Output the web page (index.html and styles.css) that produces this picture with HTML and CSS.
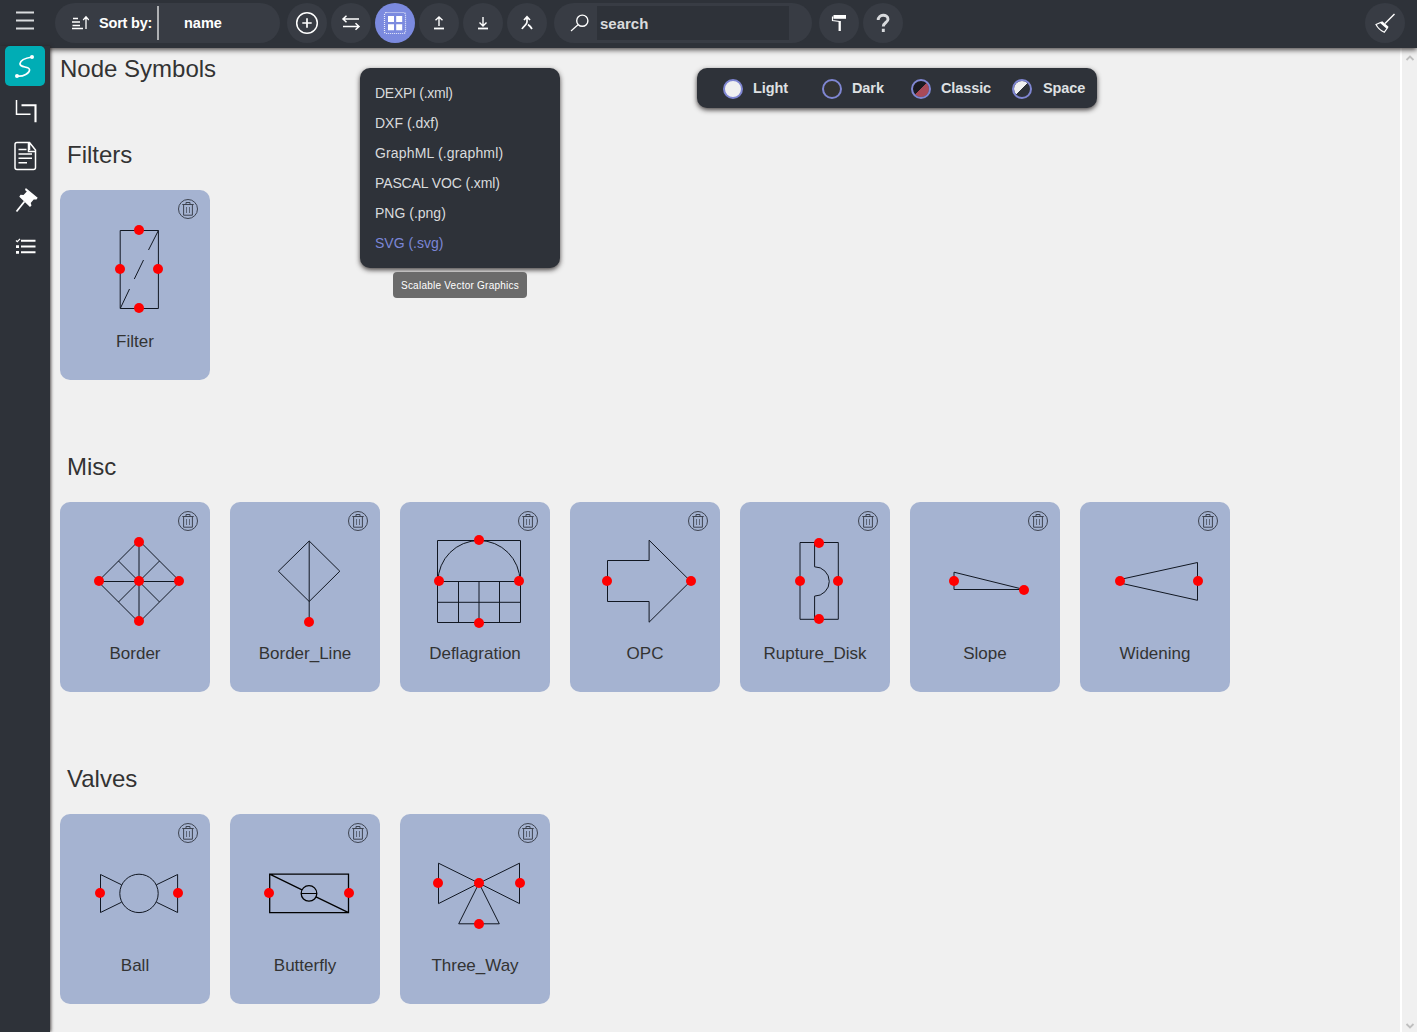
FILE: index.html
```html
<!DOCTYPE html>
<html lang="en">
<head>
<meta charset="utf-8">
<title>Node Symbols</title>
<link rel="stylesheet" href="styles.css">
</head>
<body>
<svg class="defs" width="0" height="0">
  <symbol id="trash" viewBox="0 0 20 20">
    <circle cx="10" cy="10" r="9.5"/>
    <path d="M4.3 5.5h11.4M8 5.3V3.5h4v1.8M5.6 6v10.2h8.8V6"/>
    <path class="thin" d="M8.5 8v6M11.5 8v6"/>
  </symbol>
</svg>
<header class="topbar">
  <button class="menu-btn"><svg width="20" height="20" viewBox="0 0 20 20"><path d="M1 2.500h18M1 10.500h18M1 18.500h18" stroke-width="2"/></svg></button>
  <div class="pill sort">
    <svg width="18" height="16" viewBox="0 0 18 16"><path d="M2 3.500h5M1 7h8M1.500 10.500h7.500M1 13.500h11M15 14V2M12.200 5L15 1.700 17.800 5" stroke-width="1.300"/></svg>
    <span class="sort-label">Sort by:</span><span class="sort-value">name</span>
  </div>
  <nav class="tools">
    <button class="tool"><svg width="24" height="24" viewBox="0 0 24 24"><circle cx="12" cy="12" r="10.300" stroke-width="1.500"/><path d="M12 7.300v9.400M7.300 12h9.400" stroke-width="1.700"/></svg></button>
    <button class="tool"><svg width="24" height="24" viewBox="0 0 24 24"><path d="M20 8H4M7.500 4.800L4 8l3.500 3.200M4 15.500h16M16.500 12.300l3.500 3.200-3.500 3.200" stroke-width="1.500"/></svg></button>
    <button class="tool active"><svg width="24" height="24" viewBox="0 0 24 24"><rect x="1.500" y="1.500" width="21" height="21" rx="2" stroke-width="1.200" stroke-dasharray="1 1" opacity=".85"/><path class="solid" d="M5 5h6v6H5zM13.200 5h6v6h-6zM5 13.200h6v6H5zM13.200 13.200h6v6h-6z"/></svg></button>
    <button class="tool"><svg width="24" height="24" viewBox="0 0 24 24"><path d="M12 15V6M8.500 9.300L12 6 15.500 9.300" stroke-width="1.400"/><path d="M7 17.500h10" stroke-width="1.800"/></svg></button>
    <button class="tool"><svg width="24" height="24" viewBox="0 0 24 24"><path d="M12 6V14.500M8.500 11.500l3.500 3.400 3.500-3.400" stroke-width="1.400"/><path d="M7 17.500h10" stroke-width="1.800"/></svg></button>
    <button class="tool"><svg width="24" height="24" viewBox="0 0 24 24"><path d="M12 5.800V11c0 3-3.500 3.500-5 7M13 13.500c1.800 1.300 3 2.700 4 4.500M9 9l3-3.200L15 9" stroke-width="1.700"/></svg></button>
  </nav>
  <div class="pill search">
    <svg width="20" height="18" viewBox="0 0 20 18"><circle cx="12.300" cy="6.700" r="5.600" stroke-width="1.400"/><path d="M8 10.800L1 17" stroke-width="1.200"/></svg>
    <span class="search-field">search</span>
  </div>
  <nav class="tools">
    <button class="tool"><svg width="24" height="24" viewBox="0 0 24 24"><path class="solid" d="M6.500 4h12.500v3.800H6.500z"/><path d="M6.500 6H5.500v3.500l7.200 1" stroke-width="1.200"/><path d="M12.700 10v10" stroke-width="2.300"/></svg></button>
    <button class="tool help"><svg width="24" height="24" viewBox="0 0 24 24"><path d="M7.200 9c0-6.200 9.800-6.200 9.800-.8 0 3.200-4.700 3.500-4.700 7.300M12.300 17.700v3.300" stroke-width="2.900"/></svg></button>
  </nav>
  <button class="tool clean"><svg width="24" height="24" viewBox="0 0 24 24"><path d="M21.500 3L12 12.500" stroke-width="1.400"/><path d="M8.300 11.200l6.300 5.500-3.300 4.600C7.500 19.500 4.500 16.500 3 13.500l5.300-2.300z" stroke-width="1.200"/><path d="M8.300 11.200l6.300 5.500" stroke-width="2.800"/></svg></button>
</header>
<div class="body">
  <aside class="sidebar">
    <button class="side active"><svg width="30" height="30" viewBox="0 0 30 30"><path d="M7 25c6 1 13-3 12.500-6.500C19 15 9.500 17 10 12.500 10.500 9 16 7 22 6" stroke-width="1.700"/><circle class="solid" cx="7" cy="25" r="2"/><circle class="solid" cx="22" cy="6" r="2"/></svg></button>
    <button class="side"><svg width="30" height="30" viewBox="0 0 30 30"><path d="M6.500 4v14.300H20.500" stroke-width="1.500"/><path d="M11.500 9.300h14v17" stroke-width="2.100"/></svg></button>
    <button class="side"><svg width="30" height="30" viewBox="0 0 30 30"><path d="M7 1.600h12.500L25.500 9v17.500q0 2-2 2H7q-2 0-2-2v-23q0-1.900 2-1.900zM18.500 2v8.500h7M19.500 2v7" stroke-width="1.500"/><path d="M8.500 8.500h8M8.500 13H22M8.500 17.200H22M8.500 21.700H17" stroke-width="1.500"/></svg></button>
    <button class="side"><svg width="30" height="30" viewBox="0 0 30 30"><path class="solid" d="M15.800 2l11.900 9.700-1.200 1.900-2.800-.2-3 3.700.8 2.500-1.500 1.500L9.300 10.700l1.200-2 3 .3 3.300-3.500-1.800-1.600z"/><path d="M14.500 15.500L6.500 25.500" stroke-width="1.800"/></svg></button>
    <button class="side"><svg width="30" height="30" viewBox="0 0 30 30"><path d="M11 9.800h14.500M11 15.500h14.500M11 21.300h14.500" stroke-width="2"/><path d="M7.500 14.200v2.700M7.500 20v2.700" stroke-width="3"/><path d="M6 9.500l1.300 1.200L10 7.800" stroke-width="1.200"/></svg></button>
  </aside>
  <main class="content">
    <h1>Node Symbols</h1>
    <section>
      <h2>Filters</h2>
      <div class="cards">
        <article class="card"><svg class="trash"><use href="#trash"/></svg>
          <svg class="drawing" viewBox="0 29 150 106"><path d="M60.200 40.500h38.200v78H60.200zM98.400 40.500L88.500 60M83.500 70l-9.200 19M69.500 99l-9 19"/><g class="ports"><circle cx="79" cy="40" r="5"/><circle cx="60" cy="79" r="5"/><circle cx="98" cy="79" r="5"/><circle cx="79" cy="118" r="5"/></g></svg>
          <span>Filter</span></article>
      </div>
    </section>
    <section>
      <h2>Misc</h2>
      <div class="cards">
        <article class="card"><svg class="trash"><use href="#trash"/></svg>
          <svg class="drawing" viewBox="0 29 150 106"><path d="M79 38.500L120 79.500l-41 41-41-41zM79 38.500v82M38 79.500h82M58.500 59l41 41M99.500 59l-41 41"/><g class="ports"><circle cx="79" cy="40" r="5"/><circle cx="39" cy="79" r="5"/><circle cx="119" cy="79" r="5"/><circle cx="79" cy="79" r="5"/><circle cx="79" cy="119" r="5"/></g></svg>
          <span>Border</span></article>
        <article class="card"><svg class="trash"><use href="#trash"/></svg>
          <svg class="drawing" viewBox="0 29 150 106"><path d="M79.200 39l30.600 30.200-30.600 30.300L48.400 69.200zM79.200 39v80"/><g class="ports"><circle cx="79" cy="120" r="5"/></g></svg>
          <span>Border_Line</span></article>
        <article class="card"><svg class="trash"><use href="#trash"/></svg>
          <svg class="drawing" viewBox="0 29 150 106"><path d="M37.500 38.500h83v82h-83zM37.500 79.500h83M37.500 100.300h83M58.500 79.500v41M79 79.500v41M99.500 79.500v41M38 79.500a41 41 0 0 1 82 0"/><g class="ports"><circle cx="79" cy="38" r="5"/><circle cx="39" cy="79" r="5"/><circle cx="119" cy="79" r="5"/><circle cx="79" cy="121" r="5"/></g></svg>
          <span>Deflagration</span></article>
        <article class="card"><svg class="trash"><use href="#trash"/></svg>
          <svg class="drawing" viewBox="0 29 150 106"><path d="M37.500 58.500h41.600V38.200l41.400 41-41.400 41V99.500H37.500z"/><g class="ports"><circle cx="37" cy="79" r="5"/><circle cx="121" cy="79" r="5"/></g></svg>
          <span>OPC</span></article>
        <article class="card"><svg class="trash"><use href="#trash"/></svg>
          <svg class="drawing" viewBox="0 29 150 106"><path d="M60 40.500h38.300v76.800H60zM74.600 40.500v24.300a14.600 14.600 0 0 1 0 29.300v23.200"/><g class="ports"><circle cx="79" cy="41" r="5"/><circle cx="60" cy="79" r="5"/><circle cx="98" cy="79" r="5"/><circle cx="79" cy="117" r="5"/></g></svg>
          <span>Rupture_Disk</span></article>
        <article class="card"><svg class="trash"><use href="#trash"/></svg>
          <svg class="drawing" viewBox="0 29 150 106"><path d="M44 70.200l70 17.300H44z"/><g class="ports"><circle cx="44" cy="79" r="5"/><circle cx="114" cy="88" r="5"/></g></svg>
          <span>Slope</span></article>
        <article class="card"><svg class="trash"><use href="#trash"/></svg>
          <svg class="drawing" viewBox="0 29 150 106"><path d="M40 77.500l77.500-17v37.800L40 81z"/><g class="ports"><circle cx="40" cy="79" r="5"/><circle cx="118" cy="79" r="5"/></g></svg>
          <span>Widening</span></article>
      </div>
    </section>
    <section>
      <h2>Valves</h2>
      <div class="cards">
        <article class="card"><svg class="trash"><use href="#trash"/></svg>
          <svg class="drawing" viewBox="0 29 150 106"><circle cx="79" cy="79.400" r="19.200"/><path d="M61.600 70.800L40.500 60.500v38l21.100-10.300M96.400 70.800l21.200-10.300v38L96.400 88.200"/><g class="ports"><circle cx="40" cy="79" r="5"/><circle cx="118" cy="79" r="5"/></g></svg>
          <span>Ball</span></article>
        <article class="card"><svg class="trash"><use href="#trash"/></svg>
          <svg class="drawing bold" viewBox="0 29 150 106"><path d="M39.700 60.200h78.800v38.500H39.700zM39.700 60.200l32.300 15.700M86 82.900l32.500 15.800"/><path class="hair" d="M71 79.500h16"/><circle cx="79" cy="79.400" r="7.800"/><g class="ports"><circle cx="39" cy="79" r="5"/><circle cx="119" cy="79" r="5"/></g></svg>
          <span>Butterfly</span></article>
        <article class="card"><svg class="trash"><use href="#trash"/></svg>
          <svg class="drawing" viewBox="0 29 150 106"><path d="M38.500 49.200L79 69.200l40.500-20v40.400L79 69.200 38.500 89.600zM79 69.200l20.300 40.600H58.700z"/><g class="ports"><circle cx="38" cy="69" r="5"/><circle cx="79" cy="69" r="5"/><circle cx="120" cy="69" r="5"/><circle cx="79" cy="110" r="5"/></g></svg>
          <span>Three_Way</span></article>
      </div>
    </section>
  </main>
  <div class="scrollbar">
    <svg width="10" height="8" viewBox="0 0 10 8"><path d="M1.500 6L5 2.500 8.500 6"/></svg>
    <svg width="10" height="8" viewBox="0 0 10 8"><path d="M1.500 2L5 5.500 8.500 2"/></svg>
  </div>
</div>
<ul class="export-menu">
  <li class="tight">DEXPI (.xml)</li><li>DXF (.dxf)</li><li class="loose">GraphML (.graphml)</li><li class="snug">PASCAL VOC (.xml)</li><li>PNG (.png)</li><li class="hover">SVG (.svg)</li>
</ul>
<div class="tooltip">Scalable Vector Graphics</div>
<div class="themes">
  <span class="theme light">Light</span><span class="theme dark">Dark</span><span class="theme classic">Classic</span><span class="theme space">Space</span>
</div>
</body>
</html>
```

FILE: styles.css
```css
*, *::before { box-sizing: border-box; }
body {
  margin: 0;
  height: 1032px;
  overflow: hidden;
  display: flex;
  flex-direction: column;
  position: relative;
  background: #f0f0f0;
  color: #333;
  font-family: "Liberation Sans", Arial, sans-serif;
}
.defs { position: absolute; }
button { border: 0; padding: 0; background: none; }
svg { display: block; flex: none; fill: none; stroke: #fff; }
.solid { fill: #fff; stroke: none; }

.topbar {
  flex: none;
  height: 48px;
  display: flex;
  align-items: center;
  padding: 0 12px 2px 0;
  background: #2e3239;
  box-shadow: 0 2px 5px rgba(40, 35, 35, .8);
  position: relative;
  z-index: 1;
  font-size: 15px;
  font-weight: bold;
  color: #fff;
}
.menu-btn { width: 55px; display: flex; padding: 0 0 6px 15px; }
.menu-btn svg { stroke: #d9dbde; }
.pill { height: 40px; border-radius: 20px; background: #383c44; display: flex; align-items: center; }
.sort { width: 225px; padding-left: 16px; }
.sort-label {
  margin-left: 10px;
  width: 60px;
  height: 34px;
  line-height: 35px;
  border-right: 2px solid #aeb0b3;
  white-space: nowrap;
  font-size: 14.500px;
  letter-spacing: -.2px;
}
.sort-value { margin-left: 25px; font-size: 14.500px; }
.tools { display: flex; gap: 4px; margin-left: 7px; }
.tool {
  width: 40px;
  height: 40px;
  border-radius: 50%;
  background: #383c44;
  display: flex;
  align-items: center;
  justify-content: center;
}
.tool.active { background: #7b8adf; }
.help svg { stroke: #d8dadd; }
.search { width: 258px; margin-left: 7px; padding-left: 16px; }
.search-field {
  width: 192px;
  height: 34px;
  line-height: 35px;
  margin-left: 7px;
  padding-left: 3px;
  background: #2e3239;
  color: #dadbdd;
}
.clean { margin-left: auto; }

.body { flex: 1; display: flex; min-height: 0; }
.sidebar {
  width: 50px;
  background: #2e3239;
  box-shadow: 1px 0 3px rgba(40, 35, 35, .8);
  display: flex;
  flex-direction: column;
  align-items: center;
  gap: 5px;
  position: relative;
  z-index: 2;
  margin-top: -2px;
}
.side {
  width: 40px;
  height: 40px;
  border-radius: 5px;
  display: flex;
  align-items: center;
  justify-content: center;
}
.side.active { background: #00adb5; }

.content { flex: 1; padding: 7px 10px 0; }
h1, h2 { margin: 0; font-size: 24px; font-weight: normal; line-height: 28px; }
section { height: 312px; padding-top: 58px; }
h2 { padding-left: 7px; margin-bottom: 21px; }
.cards { display: flex; gap: 20px; }
.card {
  width: 150px;
  height: 190px;
  padding-top: 9px;
  border-radius: 10px;
  background: #a5b3d1;
  display: flex;
  flex-direction: column;
  align-items: center;
  font-size: 17px;
  line-height: 20px;
}
.card .trash { width: 20px; height: 20px; align-self: flex-end; margin-right: 12px; stroke: #3d4350; stroke-width: 1; }
.thin { stroke-width: .7; }
.drawing { width: 150px; height: 106px; stroke: #111722; stroke-width: 1; }
.drawing.bold { stroke: #000; stroke-width: 1.300; }
.hair { stroke-width: 1; }
.ports { fill: #f00; stroke: none; }
.card span { margin-top: 7px; }

.scrollbar {
  width: 17px;
  border-left: 2px solid #fff;
  padding: 6px 0 2px 3px;
  display: flex;
  flex-direction: column;
  justify-content: space-between;
}
.scrollbar svg { stroke: #bfbfbf; stroke-width: 1.800; }

.export-menu {
  position: absolute;
  left: 360px;
  top: 68px;
  z-index: 3;
  width: 200px;
  height: 200px;
  margin: 0;
  padding: 10px 15px;
  list-style: none;
  border-radius: 10px;
  background: #2e3239;
  box-shadow: 0 2px 5px rgba(40, 35, 35, .85);
  color: #d9dbdd;
  font-size: 14px;
  line-height: 30px;
}
.export-menu .tight { letter-spacing: -.27px; }
.export-menu .snug { letter-spacing: -.12px; }
.export-menu .loose { letter-spacing: .15px; }
.export-menu .hover { color: #7b86d6; }
.tooltip {
  position: absolute;
  left: 393px;
  top: 272px;
  z-index: 4;
  width: 134px;
  height: 26px;
  border-radius: 4px;
  background: #6b6b6b;
  color: #fff;
  font-size: 10px;
  letter-spacing: .24px;
  line-height: 27px;
  text-align: center;
  white-space: nowrap;
}
.themes {
  position: absolute;
  left: 697px;
  top: 68px;
  z-index: 3;
  width: 400px;
  height: 40px;
  padding-left: 26px;
  border-radius: 10px;
  background: #2e3239;
  box-shadow: 0 2px 5px rgba(40, 35, 35, .85);
  display: flex;
  align-items: center;
  color: #dfe0e2;
  font-size: 14.500px;
  letter-spacing: -.1px;
  font-weight: bold;
}
.theme { flex: none; display: flex; align-items: center; gap: 10px; white-space: nowrap; width: 99px; }
.theme::before {
  content: "";
  width: 20px;
  height: 20px;
  margin-top: 2px;
  border: 2px solid #7f86d2;
  border-radius: 50%;
  background: #f0f0f0;
}
.theme.dark { width: 89px; }
.theme.dark::before { background: #333; }
.theme.classic { width: 101px; }
.theme.classic::before { background: linear-gradient(135deg, #1b1a20 50%, #a94a58 50%) padding-box; }
.theme.space { width: auto; gap: 11px; }
.theme.space::before { background: linear-gradient(135deg, #f0f0f0 50%, #2e3239 50%) padding-box; }
```
